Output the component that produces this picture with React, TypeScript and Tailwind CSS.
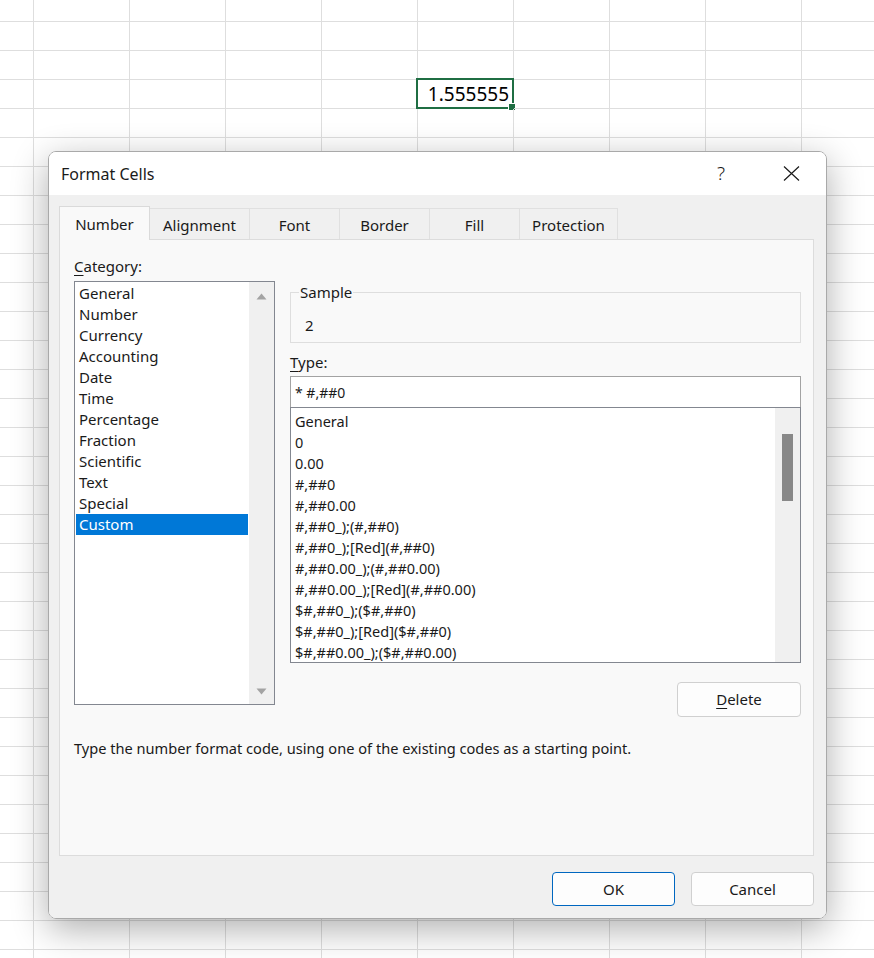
import React from "react";

const CATEGORIES = [
  "General",
  "Number",
  "Currency",
  "Accounting",
  "Date",
  "Time",
  "Percentage",
  "Fraction",
  "Scientific",
  "Text",
  "Special",
  "Custom",
];

const FORMATS = [
  "General",
  "0",
  "0.00",
  "#,##0",
  "#,##0.00",
  "#,##0_);(#,##0)",
  "#,##0_);[Red](#,##0)",
  "#,##0.00_);(#,##0.00)",
  "#,##0.00_);[Red](#,##0.00)",
  "$#,##0_);($#,##0)",
  "$#,##0_);[Red]($#,##0)",
  "$#,##0.00_);($#,##0.00)",
];

const TABS = [
  { label: "Number", w: "w-[91px]" },
  { label: "Alignment", w: "w-[100px]" },
  { label: "Font", w: "w-[90px]" },
  { label: "Border", w: "w-[90px]" },
  { label: "Fill", w: "w-[90px]" },
  { label: "Protection", w: "w-[98px]" },
];

const ROWS = 34;
const COLS = 10;

function Sheet() {
  const cells = [];
  for (let r = 0; r < ROWS; r++) {
    for (let c = 0; c < COLS; c++) {
      const selected = r === 3 && c === 5;
      cells.push(
        <div
          key={`${r}-${c}`}
          className="relative border-r border-b border-[#dedede]"
        >
          {selected && (
            <>
              <div className="flex h-full items-center justify-end pr-[4px] text-[19px] text-black">
                1.555555
              </div>
              <div className="absolute left-[-2px] top-[-2px] h-[31px] w-[98px] border-2 border-[#1f6e43]" />
              <div className="absolute left-[90px] top-[23px] h-[8px] w-[8px] border border-white bg-[#1f6e43]" />
            </>
          )}
        </div>,
      );
    }
  }
  return (
    <div className="grid grid-cols-[34px_repeat(9,96px)] grid-rows-[22px_repeat(33,29px)]">
      {cells}
    </div>
  );
}

function ArrowUp() {
  return (
    <svg width="11" height="7" viewBox="0 0 11 7">
      <path d="M5.5 0.5L10.5 6.5H0.5Z" fill="#a3a3a3" />
    </svg>
  );
}

function ArrowDown() {
  return (
    <svg width="11" height="7" viewBox="0 0 11 7">
      <path d="M0.5 0.5H10.5L5.5 6.5Z" fill="#a3a3a3" />
    </svg>
  );
}

function CloseIcon() {
  return (
    <svg width="17" height="15" viewBox="0 0 17 15">
      <path d="M1 0.5L16 14.5M16 0.5L1 14.5" stroke="#1b1b1b" strokeWidth="1.2" fill="none" />
    </svg>
  );
}

function Dialog() {
  return (
    <div className="absolute left-[48px] top-[151px] flex h-[768px] w-[779px] flex-col overflow-hidden rounded-[8px] border border-[#a9a9a9] shadow-[0_10px_36px_rgba(0,0,0,0.32)]">
      {/* title bar */}
      <div className="flex h-[43px] shrink-0 items-center bg-white">
        <div className="pl-[12px] text-[16px] text-[#1a1a1a]">Format Cells</div>
        <div className="flex-1" />
        <div className="w-[70px] text-center text-[19px] font-light text-[#1a1a1a]">?</div>
        <div className="flex w-[70px] items-center justify-center">
          <CloseIcon />
        </div>
      </div>

      <div className="flex flex-1 flex-col bg-[#f0f0f0] pb-[12px] pl-[10px] pr-[12px] pt-[11px]">
        {/* tabs */}
        <div className="flex h-[33px] items-end">
          {TABS.map((t, i) =>
            i === 0 ? (
              <div
                key={t.label}
                className={`${t.w} relative z-10 -mb-px flex h-[34px] items-center justify-center border-l border-r border-t border-[#dadada] bg-[#f9f9f9] pt-[1px] text-[15px] text-[#1a1a1a]`}
              >
                {t.label}
              </div>
            ) : (
              <div
                key={t.label}
                className={`${t.w} flex h-[31px] items-center justify-center border-r border-t border-[#e0e0e0] pt-[3px] text-[15px] text-[#1a1a1a]`}
              >
                {t.label}
              </div>
            ),
          )}
        </div>

        {/* panel */}
        <div className="flex flex-1 flex-col border border-[#dcdcdc] bg-[#f9f9f9] pl-[14px] pr-[12px] pt-[16px] text-[15px] text-[#1a1a1a]">
          <div className="flex gap-[15px]">
            {/* category column */}
            <div className="flex w-[201px] flex-col">
              <div className="h-[20px] leading-[20px]">
                <span className="underline underline-offset-[3px]">C</span>ategory:
              </div>
              <div className="mt-[5px] flex h-[424px] border border-[#838790] bg-white">
                <div className="flex flex-1 flex-col pt-[1px]">
                  {CATEGORIES.map((c) => (
                    <div
                      key={c}
                      className={`mx-[1px] h-[21px] pl-[3px] leading-[21px] ${
                        c === "Custom" ? "bg-[#0078d7] text-white" : ""
                      }`}
                    >
                      {c}
                    </div>
                  ))}
                </div>
                <div className="flex w-[25px] flex-col items-center justify-between bg-[#f0f0f0] pb-[9px] pt-[11px]">
                  <ArrowUp />
                  <ArrowDown />
                </div>
              </div>
            </div>

            {/* type column */}
            <div className="flex w-[511px] flex-col">
              <fieldset className="mt-[26px] border border-[#dedede] pb-[7px]">
                <legend className="ml-[8px] h-[20px] px-[1px] leading-[20px]">Sample</legend>
                <div className="mt-[13px] h-[20px] pl-[14px] leading-[20px]">2</div>
              </fieldset>

              <div className="mt-[9px] h-[20px] leading-[20px]">
                <span className="underline underline-offset-[3px]">T</span>ype:
              </div>
              <div className="mt-[4px] flex h-[32px] items-center border border-[#a3a3a3] bg-white pl-[4px] text-[14px]">
                * #,##0
              </div>
              <div className="-mt-px flex h-[256px] border border-[#838790] bg-white">
                <div className="flex flex-1 flex-col pl-[4px] pt-[3px]">
                  {FORMATS.map((f) => (
                    <div key={f} className="h-[21px] whitespace-nowrap text-[14.5px] leading-[21px]">
                      {f}
                    </div>
                  ))}
                </div>
                <div className="flex w-[25px] flex-col items-center bg-[#f0f0f0] pt-[26px]">
                  <div className="h-[67px] w-[11px] bg-[#888888]" />
                </div>
              </div>
              <div className="mt-[19px] flex justify-end">
                <div className="flex h-[35px] w-[124px] items-center justify-center rounded-[4px] border border-[#d0d0d0] bg-[#fdfdfd]">
                  <span className="underline underline-offset-[3px]">D</span>elete
                </div>
              </div>
            </div>
          </div>

          <div className="mt-[21px] h-[20px] text-[14.6px] leading-[20px]">
            Type the number format code, using one of the existing codes as a starting point.
          </div>
        </div>

        {/* footer buttons */}
        <div className="mt-[16px] flex justify-end gap-[16px] text-[15px] text-[#1a1a1a]">
          <div className="flex h-[34px] w-[123px] items-center justify-center rounded-[4px] border border-[#0067c0] bg-[#fdfdfd]">
            OK
          </div>
          <div className="flex h-[34px] w-[123px] items-center justify-center rounded-[4px] border border-[#d0d0d0] bg-[#fdfdfd]">
            Cancel
          </div>
        </div>
      </div>
    </div>
  );
}

export default function App() {
  return (
    <div
      className="relative h-[958px] w-[874px] overflow-hidden bg-white"
      style={{ fontFamily: '"Noto Sans", "Open Sans", sans-serif' }}
    >
      <Sheet />
      <Dialog />
    </div>
  );
}
